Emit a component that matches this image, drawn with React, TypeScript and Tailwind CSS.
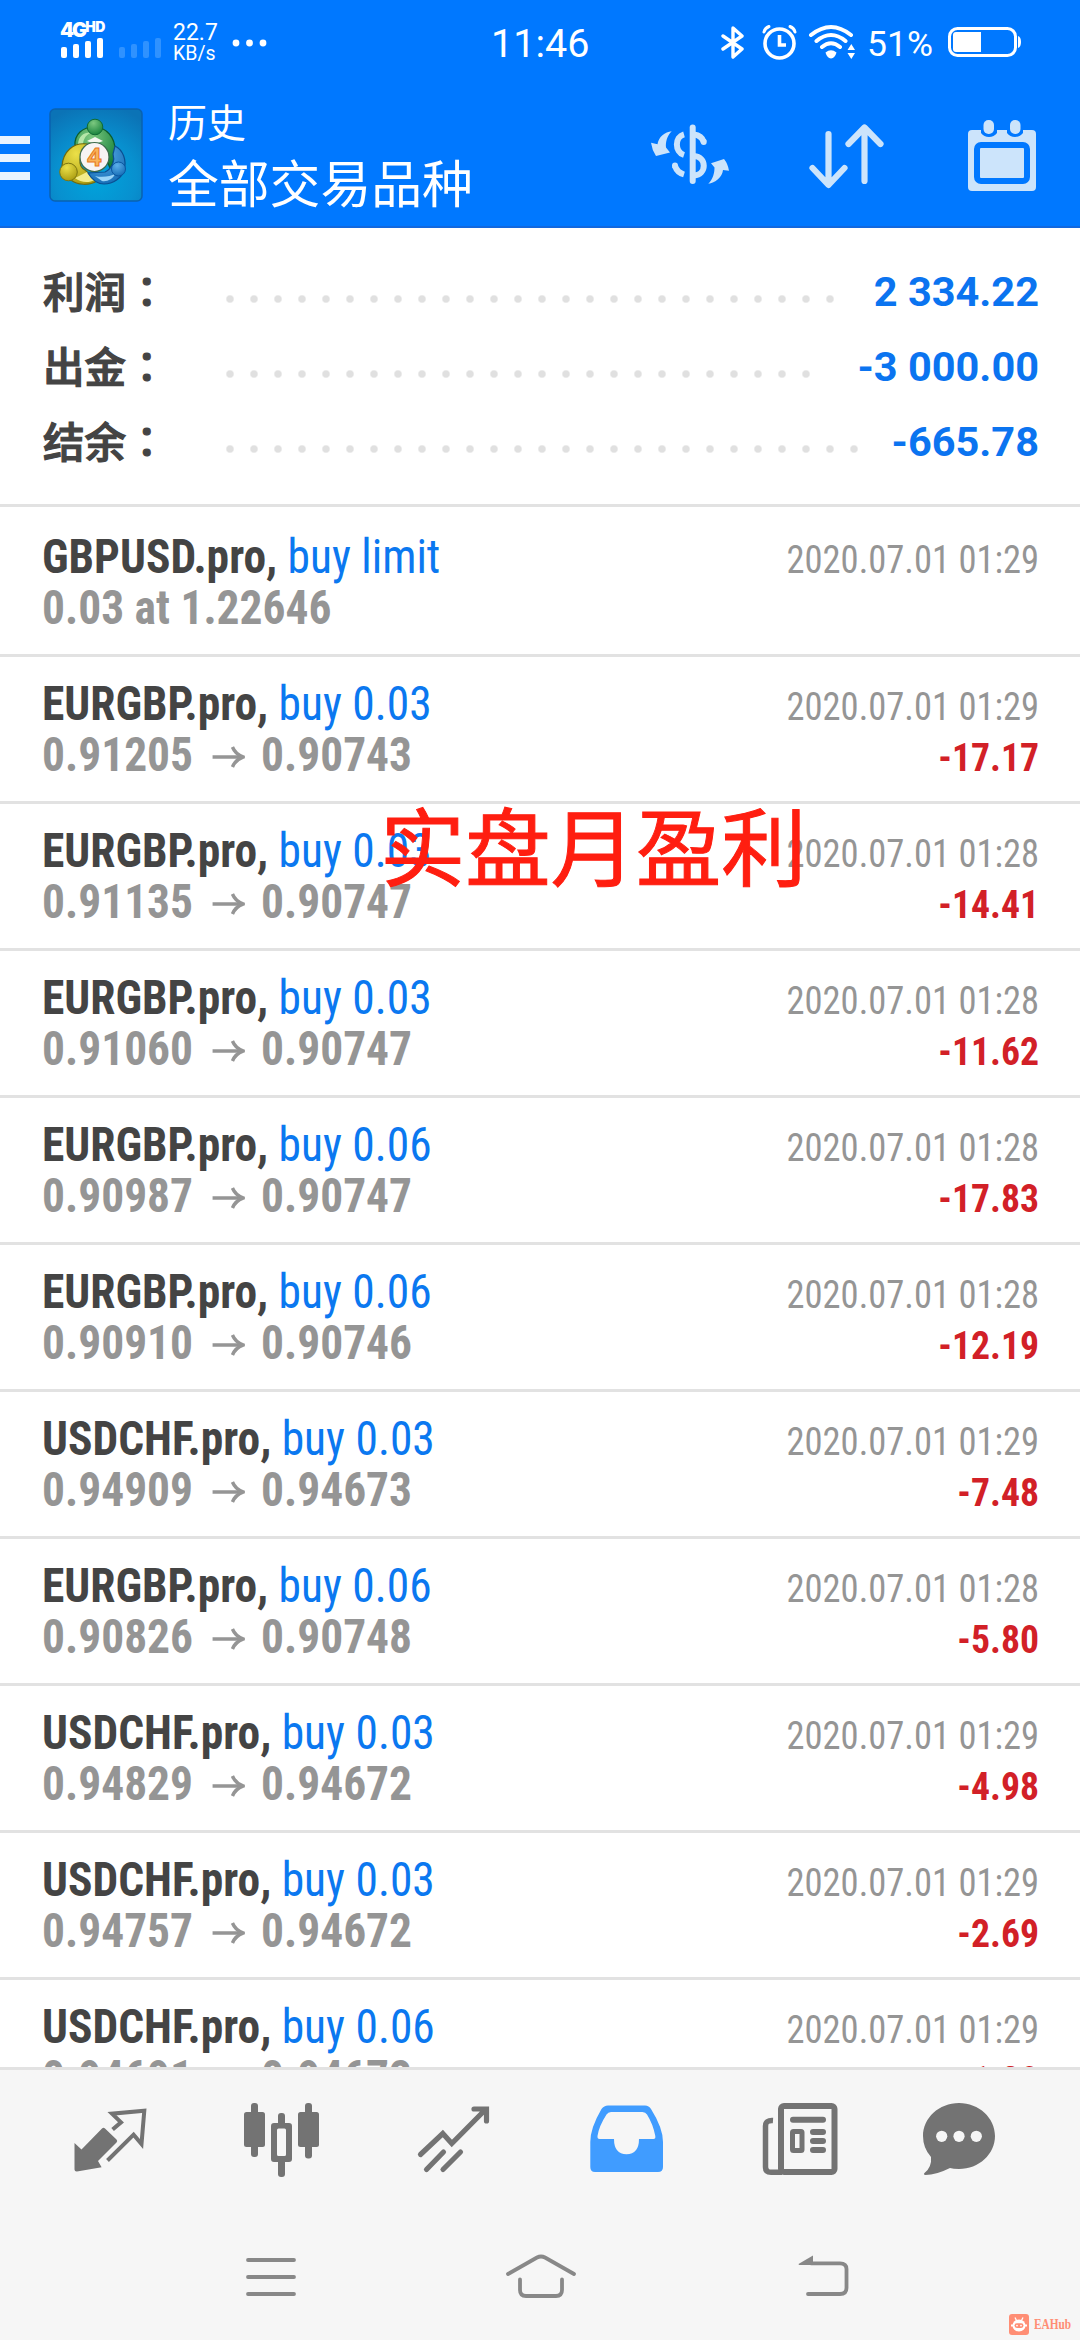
import React from 'react';

interface Deal {
  symbol: string;
  type: string;
  detail?: string;
  open?: string;
  close?: string;
  time: string;
  profit?: string;
}

const summary = [
  { label: '利润', value: '2 334.22', dots: 26 },
  { label: '出金', value: '-3 000.00', dots: 25 },
  { label: '结余', value: '-665.78', dots: 27 },
];

const deals: Deal[] = [
  { symbol: 'GBPUSD.pro', type: 'buy limit', detail: '0.03 at 1.22646', time: '2020.07.01 01:29' },
  { symbol: 'EURGBP.pro', type: 'buy 0.03', open: '0.91205', close: '0.90743', time: '2020.07.01 01:29', profit: '-17.17' },
  { symbol: 'EURGBP.pro', type: 'buy 0.03', open: '0.91135', close: '0.90747', time: '2020.07.01 01:28', profit: '-14.41' },
  { symbol: 'EURGBP.pro', type: 'buy 0.03', open: '0.91060', close: '0.90747', time: '2020.07.01 01:28', profit: '-11.62' },
  { symbol: 'EURGBP.pro', type: 'buy 0.06', open: '0.90987', close: '0.90747', time: '2020.07.01 01:28', profit: '-17.83' },
  { symbol: 'EURGBP.pro', type: 'buy 0.06', open: '0.90910', close: '0.90746', time: '2020.07.01 01:28', profit: '-12.19' },
  { symbol: 'USDCHF.pro', type: 'buy 0.03', open: '0.94909', close: '0.94673', time: '2020.07.01 01:29', profit: '-7.48' },
  { symbol: 'EURGBP.pro', type: 'buy 0.06', open: '0.90826', close: '0.90748', time: '2020.07.01 01:28', profit: '-5.80' },
  { symbol: 'USDCHF.pro', type: 'buy 0.03', open: '0.94829', close: '0.94672', time: '2020.07.01 01:29', profit: '-4.98' },
  { symbol: 'USDCHF.pro', type: 'buy 0.03', open: '0.94757', close: '0.94672', time: '2020.07.01 01:29', profit: '-2.69' },
  { symbol: 'USDCHF.pro', type: 'buy 0.06', open: '0.94691', close: '0.94672', time: '2020.07.01 01:29', profit: '-1.20' },
];

const SignalBars = ({ className }: { className: string }) => (
  <svg width="42" height="20" viewBox="0 0 42 20" fill="currentColor" className={className}>
    <rect x="0" y="9" width="6" height="11" rx="2" />
    <rect x="12" y="6" width="6" height="14" rx="2" />
    <rect x="24" y="3" width="6" height="17" rx="2" />
    <rect x="36" y="0" width="6" height="20" rx="2" />
  </svg>
);

const StatusBar = () => (
  <div className="flex h-[84px] w-full shrink-0 items-start text-white">
    <div className="ml-[60px] mt-[20px] w-[46px]">
      <div className="flex h-[18px] items-start font-['Inter'] font-black leading-none">
        <span className="text-[20px] leading-[20px] tracking-[-2px]">4G</span>
        <span className="text-[14px] leading-[14px] tracking-[-0.5px]">HD</span>
      </div>
      <SignalBars className="ml-px text-white" />
    </div>
    <SignalBars className="ml-[13px] mt-[38px] text-[#2f92ff]" />
    <div className="ml-[12px] mt-[22px] w-[50px]">
      <div className="text-[23px] leading-[22px]">22.7</div>
      <div className="text-[19.5px] leading-[19px]">KB/s</div>
    </div>
    <svg width="36" height="8" viewBox="0 0 36 8" fill="currentColor" className="ml-[9px] mt-[39px]">
      <circle cx="4" cy="4" r="3.4" />
      <circle cx="17.5" cy="4" r="3.4" />
      <circle cx="31" cy="4" r="3.4" />
    </svg>
    <div className="ml-[223px] mt-[22px] w-[109px] text-[39.5px] leading-[44px]">11:46</div>
    <svg width="24" height="38" viewBox="0 0 24 38" fill="none" stroke="currentColor" strokeWidth="3.4" strokeLinejoin="round" strokeLinecap="round" className="ml-[121px] mt-[24px]">
      <path d="M2 12 21 25 12 33V4L21 12 2 25" />
    </svg>
    <svg width="38" height="38" viewBox="0 0 38 38" fill="none" stroke="currentColor" strokeLinecap="round" className="ml-[16px] mt-[23px]">
      <circle cx="18.500" cy="20.500" r="14.500" strokeWidth="3.6" />
      <path d="M18.500 12V22H25" strokeWidth="3.6" strokeLinecap="butt" />
      <path d="M3 9Q4 5 8 3.500M29 3.500Q33 5 34 9" strokeWidth="3" />
    </svg>
    <svg width="50" height="38" viewBox="0 0 50 38" fill="none" stroke="currentColor" strokeWidth="4" strokeLinecap="round" className="ml-[9px] mt-[23px]">
      <path d="M3 12Q23 -4 43 12M8.500 18Q23 6 37.500 18M14 24Q23 16.500 32 24" />
      <path d="M17.500 29.500Q23 25 28.500 29.500Q27 35 23 35.500Q19 35 17.500 29.500Z" fill="currentColor" stroke="none" />
      <path d="M39.500 27 43.300 21 47 27ZM39.500 30 43.300 36 47 30Z" fill="currentColor" stroke="none" />
    </svg>
    <div className="ml-[9px] mt-[24px] w-[74px] text-[35.5px] leading-[40px]">51%</div>
    <svg width="74" height="34" viewBox="0 0 74 34" fill="none" stroke="currentColor" className="ml-[6px] mt-[25px]">
      <rect x="2.500" y="3.500" width="66" height="27" rx="8" strokeWidth="3" />
      <path d="M9 7H34V27H9Q6 27 6 24V10Q6 7 9 7Z" fill="currentColor" stroke="none" />
      <path d="M71 11Q74 12 74 17Q74 22 71 23Z" fill="currentColor" stroke="none" />
    </svg>
  </div>
);

const AppLogo = () => (
  <svg width="94" height="94" viewBox="0 0 94 94">
    <defs>
      <radialGradient id="logo-bg" cx="0.5" cy="0.75" r="0.8">
        <stop offset="0" stopColor="#00a4dc" />
        <stop offset="0.55" stopColor="#0890cf" />
        <stop offset="1" stopColor="#0b73b6" />
      </radialGradient>
      <radialGradient id="logo-green" cx="0.4" cy="0.25" r="0.8">
        <stop offset="0" stopColor="#7cc880" />
        <stop offset="1" stopColor="#14803a" />
      </radialGradient>
      <radialGradient id="logo-yellow" cx="0.4" cy="0.25" r="0.8">
        <stop offset="0" stopColor="#ece048" />
        <stop offset="1" stopColor="#a89a10" />
      </radialGradient>
      <radialGradient id="logo-blue" cx="0.4" cy="0.25" r="0.9">
        <stop offset="0" stopColor="#5cb0ea" />
        <stop offset="1" stopColor="#0a62ae" />
      </radialGradient>
    </defs>
    <rect x="1" y="1" width="92" height="92" rx="5" fill="url(#logo-bg)" stroke="#0a62b0" strokeWidth="1.500" />
    <path d="M26 38C25 26 34 19 45 19C58 19 66 30 66 42C66 50 64 56 61 60L52 38 34 36Z" fill="url(#logo-green)" stroke="#0c5c2c" strokeWidth="1.200" />
    <path d="M29 36C30 27 36 24 41 25C36 28 34 32 34 38Z" fill="#b5e6a8" />
    <path d="M38 36C24 34 14 44 13 58L22 72C28 77 40 78 48 73L36 62C28 58 30 46 38 40Z" fill="url(#logo-yellow)" stroke="#6f6a10" strokeWidth="1.200" />
    <path d="M26 70C32 75 40 75 46 72C42 70 40 67 38 64Z" fill="#f3ec8a" />
    <path d="M66 38C74 42 78 52 75 62C73 70 64 76 55 76C47 76 42 70 39 65L56 64C64 60 66 52 64 46Z" fill="url(#logo-blue)" stroke="#0a4f92" strokeWidth="1.200" />
    <path d="M46 68C54 70 62 68 66 66C64 71 58 74 53 73Z" fill="#9ad4f7" />
    <circle cx="46" cy="19" r="7.800" fill="url(#logo-green)" stroke="#0f6b34" />
    <circle cx="19.500" cy="64" r="8.800" fill="url(#logo-yellow)" stroke="#7c7610" />
    <circle cx="69.500" cy="61" r="7" fill="url(#logo-blue)" stroke="#0a56a0" />
    <path d="M38 33 46 29 54 33 46 36Z" fill="#f4f8f0" />
    <circle cx="45.500" cy="49" r="14.500" fill="#f7f4f4" stroke="#3c6a4c" strokeWidth="1.200" />
    <text x="45.500" y="58" textAnchor="middle" className="font-['Noto_Sans'] text-[25px] font-bold" fill="#f8b45a" stroke="#e8761c" strokeWidth="1">4</text>
  </svg>
);

const CurrencyIcon = () => (
  <svg width="100" height="90" viewBox="0 0 100 90" fill="none" stroke="#cce4fb" strokeWidth="6" strokeLinecap="round">
    <path d="M52.700 17.500V71" />
    <path d="M44 24.300C34.500 27 34.500 42 44 45M54 24.500C59 25 62.500 28 63.700 32M35 56C36.500 60.500 39 63 44 64.500M54 46C67 47 67 64.500 54 65.500" strokeLinecap="butt" />
    <path d="M63.700 31.500V32M35 55.500V56" />
    <path d="M11 32.700 17.500 34.300C18.500 27 25 22 31.700 21.300C27 26 25.500 32 26 37.500L30 42.500 16 46Q12 40 11 32.700ZM89 60.700 83 60C82.500 67 75 73 68.300 73.700C73 69 74.500 63 74.500 57.500L71 53.300 84 49Q88 54 89 60.700Z" fill="#cce4fb" stroke="none" />
  </svg>
);

const SortIcon = () => (
  <svg width="80" height="80" viewBox="0 0 80 80" fill="none" stroke="#cce4fb" strokeWidth="6.200" strokeLinecap="round" strokeLinejoin="round">
    <path d="M22.500 18V68M6.500 52 22.500 69 38.500 52M58.500 65V12M42.500 28 58.500 11.500 74.500 28" />
  </svg>
);

const CalendarIcon = () => (
  <svg width="70" height="74" viewBox="0 0 70 74">
    <rect x="1" y="12" width="68" height="61" rx="4" fill="#cce4fb" />
    <path d="M14 8H30V15Q27 19 22 19Q17 19 14 15ZM40 8H56V15Q53 19 48 19Q43 19 40 15Z" fill="#0078ff" />
    <rect x="16.500" y="2" width="10.500" height="14" rx="5" fill="#cce4fb" />
    <rect x="43" y="2" width="10.500" height="14" rx="5" fill="#cce4fb" />
    <rect x="10" y="27" width="50" height="36" rx="4" fill="#cce4fb" stroke="#0078ff" strokeWidth="6" />
  </svg>
);

const Header = () => (
  <header className="flex h-[228px] shrink-0 flex-col border-b-2 border-[#1268de] bg-[#0078ff]">
    <StatusBar />
    <div className="flex min-h-0 flex-1 items-start">
      <div className="mt-[52px] flex w-[30px] flex-col gap-[10px]">
        <span className="h-[8px] bg-[#e9f4ff]" />
        <span className="h-[8px] bg-[#e9f4ff]" />
        <span className="h-[8px] bg-[#e9f4ff]" />
      </div>
      <div className="ml-[19px] mt-[24px]"><AppLogo /></div>
      <div className="ml-[25px] mt-[18px] w-[320px] whitespace-nowrap text-white">
        <div className="text-[39px] leading-[44px]">历史</div>
        <div className="mt-[12px] text-[50.8px] leading-[56px]">全部交易品种</div>
      </div>
      <div className="ml-[152px] mt-[26px]"><CurrencyIcon /></div>
      <div className="ml-[66px] mt-[32px]"><SortIcon /></div>
      <div className="ml-[81px] mt-[34px]"><CalendarIcon /></div>
    </div>
  </header>
);

const Summary = () => (
  <section className="shrink-0 border-b-[3px] border-[#e2e2e2] pb-[25px] pt-[26px]">
    {summary.map((row) => (
      <div key={row.label} className="flex h-[75px] items-center pl-[43px] pr-[41px]">
        <div className="w-[175px] whitespace-nowrap text-[41.5px] font-medium leading-[75px] text-[#444] [-webkit-text-stroke:1.2px_#444]">
          {row.label}
          <span className="font-['Noto_Sans_CJK_TC',sans-serif]">：</span>
        </div>
        <div
          className="mt-[14px] h-[24px] bg-[radial-gradient(circle,#e0e0e0_3px,transparent_4.500px)] bg-[length:24px_24px]"
          style={{ width: row.dots * 24 }}
        />
        <div className="ml-auto text-[41.5px] font-bold leading-[75px] text-[#0b74f0]">{row.value}</div>
      </div>
    ))}
  </section>
);

const ArrowRight = () => (
  <svg width="34" height="24" viewBox="0 0 34 24" fill="none" stroke="#959595" strokeWidth="3.600" className="ml-[20px] mr-[17px] mt-[3px]">
    <path d="M0 12H31" />
    <path d="M21 2Q24 9 32 12Q24 15 21 22" />
  </svg>
);

const DealRow = ({ deal }: { deal: Deal }) => (
  <div className="flex h-[147px] shrink-0 justify-between border-b-[3px] border-[#e2e2e2] pl-[42px] pr-[41px] [font-stretch:75%]">
    <div className="origin-left scale-x-[0.957] whitespace-nowrap pt-[22px] text-[47.5px] leading-[51px]">
      <div>
        <span className="font-bold text-[#444]">{deal.symbol},</span>
        <span className="text-[#0b78f0]"> {deal.type}</span>
      </div>
      <div className="flex items-center font-bold text-[#959595]">
        {deal.detail ?? (
          <>
            <span>{deal.open}</span>
            <ArrowRight />
            <span>{deal.close}</span>
          </>
        )}
      </div>
    </div>
    <div className="whitespace-nowrap pt-[24px] text-right text-[39.5px] leading-[51px]">
      <div className="origin-right scale-x-[0.925] text-[#959595]">{deal.time}</div>
      <div className="origin-right scale-x-[0.955] font-bold text-[#d22027]">{deal.profit}</div>
    </div>
  </div>
);

const TabBar = () => (
  <nav className="flex h-[130px] shrink-0 items-start border-t-[3px] border-[#e2e2e2] pl-[70px] pt-[30px] text-[#737373]">
    <svg width="80" height="80" viewBox="0 0 80 80" fill="none">
      <path d="M4.500 43 11.500 49.500 32 28.500Q33.500 27 35 28.500L46.500 39.500Q48 41 46.500 42.500L28 61 31.600 67.300 7 71.600Q4.500 71.800 4.500 69.500Z" fill="currentColor" />
      <path d="M37.500 60.500 63.600 34.700 71.500 44 74.300 10.700 42 13.700 51 22.300 42.600 29.500" stroke="currentColor" strokeWidth="4" />
    </svg>
    <svg width="80" height="80" viewBox="0 0 80 80" fill="currentColor" className="ml-[92px]">
      <rect x="2" y="12" width="21" height="35" rx="2.500" />
      <rect x="9" y="3" width="7" height="54" rx="3" />
      <path fillRule="evenodd" d="M32 23H47Q50 23 50 26V59Q50 62 47 62H32Q29 62 29 59V26Q29 23 32 23ZM36.500 28.500Q35 28.500 35 30V54.500Q35 56 36.500 56H42.500Q44 56 44 54.500V30Q44 28.500 42.500 28.500Z" />
      <rect x="36" y="13" width="7" height="14" rx="3" />
      <rect x="36" y="58" width="7" height="19" rx="3" />
      <rect x="56" y="12" width="21" height="35" rx="2.500" />
      <rect x="63" y="3" width="7" height="55.500" rx="3" />
    </svg>
    <svg width="80" height="80" viewBox="0 0 80 80" fill="none" stroke="currentColor" strokeWidth="5.200" strokeLinecap="round" className="ml-[92px]">
      <path d="M6.500 54.500 28.800 33.500 37.800 43.500 71 10M60 9H72.500V21M12.500 69.500 29.500 52M29 69.500 46.500 52" />
    </svg>
    <svg width="80" height="80" viewBox="0 0 80 80" className="ml-[92px]">
      <path fillRule="evenodd" fill="#409cff" d="M22 5.500H59Q63 5.500 65 9Q77 28 77 42V67Q77 72 72 72H9Q4.300 72 4.300 67V42Q4.300 28 15.500 9Q18 5.500 22 5.500ZM25 12Q22 12 20.500 14.500Q13 26 11.500 36Q11.200 39 13.500 39H28Q28 54 40.500 54.300Q53 54 53 39H67.500Q69.800 39 69.300 36Q67 24 61 14.500Q59.500 12 56.500 12Z" />
    </svg>
    <svg width="80" height="80" viewBox="0 0 80 80" fill="none" stroke="currentColor" className="ml-[94px]">
      <rect x="21" y="6" width="53.500" height="66" rx="3" strokeWidth="6" />
      <path d="M13 20.500Q5.500 20 5.500 26V67Q5.500 72.300 11 72.300H22" strokeWidth="5.500" />
      <path d="M33 19.700H63M53 32H63M53 41H63M53 50H63" strokeWidth="6" strokeLinecap="round" />
      <rect x="32.500" y="31.500" width="9.500" height="19" rx="1" strokeWidth="5" />
    </svg>
    <svg width="80" height="80" viewBox="0 0 80 80" className="ml-[79px]">
      <path d="M40 3C60 3 76 18 76 36C76 54 60 69 40 69Q34 69 31 68Q17 75 6.500 75Q4 74.500 5.500 73Q13 67 12 57Q4 48 4 36C4 18 20 3 40 3Z" fill="currentColor" />
      <circle cx="22.700" cy="36.300" r="5.600" fill="#f6f6f6" />
      <circle cx="40" cy="36.300" r="5.600" fill="#f6f6f6" />
      <circle cx="57.300" cy="36.300" r="5.600" fill="#f6f6f6" />
    </svg>
  </nav>
);

const SystemNav = () => (
  <div className="flex flex-1 items-start pl-[245px] pt-[50px]">
    <svg width="52" height="50" viewBox="0 0 52 50" stroke="#888" strokeWidth="3.800" strokeLinecap="round">
      <path d="M3 13H49M3 30H49M3 47H49" />
    </svg>
    <svg width="74" height="52" viewBox="0 0 74 52" fill="none" stroke="#888" strokeWidth="3.800" strokeLinecap="round" className="ml-[207px]">
      <path d="M4 27 33 10.500Q37 8.500 41 10.500L70 27M16 32.500V43Q16 49 22 49H52Q58 49 58 43V32.500" />
    </svg>
    <svg width="54" height="52" viewBox="0 0 54 52" fill="none" stroke="#888" strokeWidth="3.800" strokeLinecap="round" className="ml-[219px]">
      <path d="M14 16.300H43Q49.500 16.300 49.500 22V41Q49.500 47 43 47H11" />
      <path d="M1.500 17 16 8.500V18H2Z" fill="#888" stroke="none" />
    </svg>
  </div>
);

const Watermark = () => (
  <div className="absolute bottom-[4px] right-[8px] flex items-center text-[#ff8e75]">
    <svg width="20" height="21" viewBox="0 0 20 21">
      <rect width="20" height="21" rx="3" fill="currentColor" />
      <path d="M6 3.500 7.500 6.500M14 3.500 12.500 6.500" stroke="#fff" strokeWidth="1.300" />
      <ellipse cx="10" cy="11.500" rx="6.500" ry="6" fill="#fff" />
      <path d="M2 11.500H4M16 11.500H18" stroke="#fff" strokeWidth="2" />
      <rect x="5.500" y="9.300" width="9" height="4.600" rx="2.300" fill="currentColor" />
      <circle cx="8" cy="11.600" r="0.900" fill="#fff" />
      <circle cx="12" cy="11.600" r="0.900" fill="#fff" />
    </svg>
    <div className="ml-[5px] w-[38px]">
      <span className="inline-block origin-left scale-x-[0.78] font-['Liberation_Serif',serif] text-[14.5px] font-bold leading-[20px]">EAHub</span>
    </div>
  </div>
);

const App: React.FC = () => {
  return (
    <div className="relative flex h-[2340px] w-[1080px] flex-col overflow-hidden bg-white font-['Roboto','Noto_Sans_CJK_SC',sans-serif]">
      <Header />
      <Summary />
      <main className="flex min-h-0 flex-1 flex-col overflow-hidden pt-[3px]">
        {deals.map((deal, index) => (
          <DealRow key={index} deal={deal} />
        ))}
      </main>
      <div className="flex h-[273px] shrink-0 flex-col bg-[#f6f6f6]">
        <TabBar />
        <SystemNav />
      </div>
      <div className="absolute left-[380px] top-[799px] whitespace-nowrap text-[85.3px] leading-[104px] text-[#ff1e10] [-webkit-text-stroke:1px_#ff1e10]">实盘月盈利</div>
      <Watermark />
    </div>
  );
};

export default App;
